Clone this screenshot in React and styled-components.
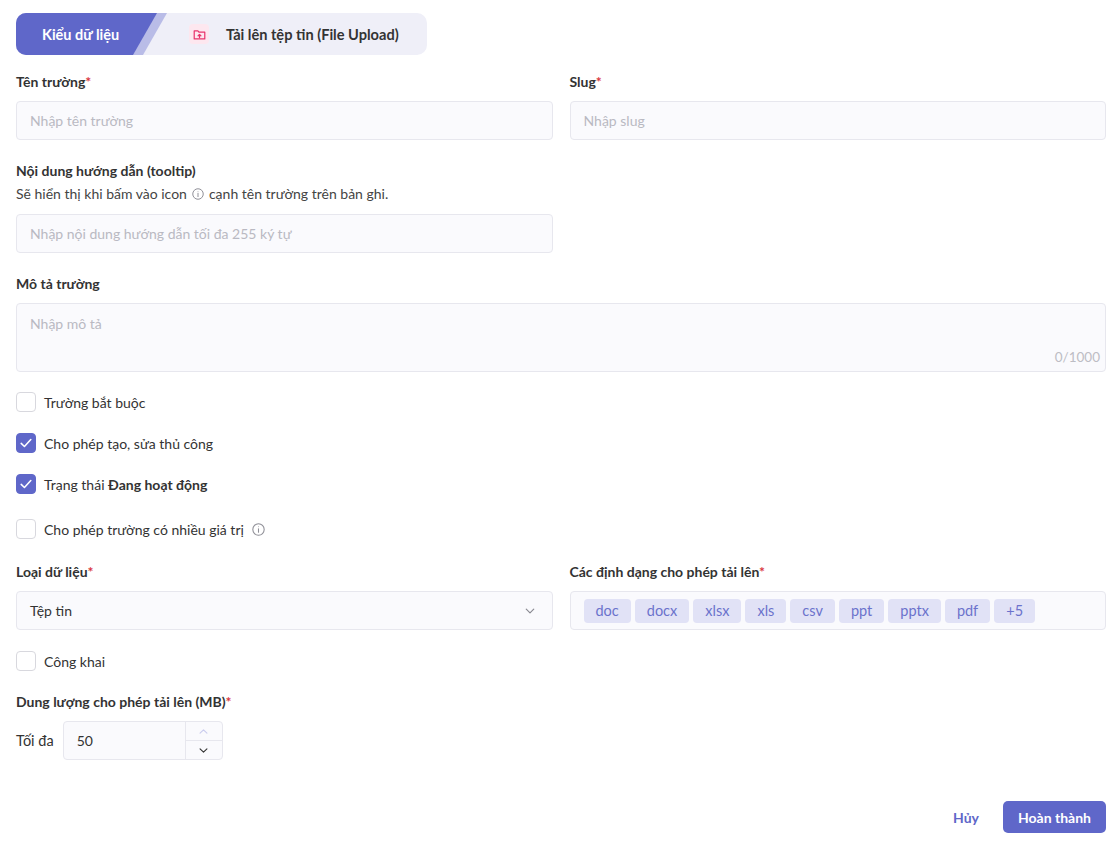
import styled, { createGlobalStyle } from 'styled-components';

const primary = '#5f67c9';

const GlobalStyle = createGlobalStyle`
  * { box-sizing: border-box; }
  body {
    margin: 0;
    background: #fff;
    font-family: Lato, "Noto Sans", sans-serif;
    color: #333;
  }
`;

const Page = styled.div`
  padding: 13px 13px 16px 16px;
  display: flex;
  flex-direction: column;
`;

const TabBar = styled.div`
  display: flex;
  align-items: center;
  width: 411px;
  height: 42px;
  background: #efeff8;
  border-radius: 10px;
  overflow: hidden;
`;

const ActiveTab = styled.div`
  position: relative;
  width: 151px;
  height: 100%;
  background: #b9bce7;
  clip-path: polygon(0 0, 100% 0, calc(100% - 24px) 100%, 0 100%);
  color: #fff;
  font-weight: 700;
  font-size: 14.5px;
  display: flex;
  align-items: center;
  padding-left: 26px;

  &::before {
    content: '';
    position: absolute;
    inset: 0;
    background: ${primary};
    clip-path: polygon(0 0, calc(100% - 10px) 0, calc(100% - 34px) 100%, 0 100%);
  }

  span { position: relative; }
`;

const Tab = styled.div`
  display: flex;
  align-items: center;
  gap: 17px;
  padding-left: 22px;
  font-weight: 700;
  font-size: 14.6px;
  color: #333;
`;

const TabIcon = styled.div`
  width: 20px;
  height: 20px;
  border-radius: 4px;
  background: #fde7ef;
  display: flex;
  align-items: center;
  justify-content: center;
`;

const Row = styled.div`
  display: grid;
  grid-template-columns: 1fr 1fr;
  column-gap: 17px;
  margin-top: ${({ $mt }) => $mt || 0}px;
`;

const Field = styled.div`
  display: flex;
  flex-direction: column;
`;

const Section = styled.div`
  margin-top: ${({ $mt }) => $mt || 0}px;
  display: flex;
  flex-direction: column;
`;

const Label = styled.div`
  font-weight: 700;
  font-size: 14px;
  line-height: 18px;
  color: #333;
  margin-bottom: ${({ $mb }) => ($mb === undefined ? 10 : $mb)}px;
`;

const Req = styled.span`
  color: #d9363e;
`;

const Hint = styled.div`
  font-size: 14px;
  line-height: 18px;
  color: #444;
  margin: 5px 0 11px;
  display: flex;
  align-items: center;
  gap: 5px;
`;

const Input = styled.div`
  height: 39px;
  border: 1px solid #e7e7ee;
  border-radius: 4px;
  background: #fafafd;
  display: flex;
  align-items: center;
  padding: 0 13px;
  font-size: 14px;
  color: ${({ $filled }) => ($filled ? '#333' : '#b9b9c2')};
`;

const HalfWidth = styled.div`
  width: calc(50% - 8.5px);
`;

const TextArea = styled.div`
  height: 69px;
  border: 1px solid #e7e7ee;
  border-radius: 4px;
  background: #fafafd;
  padding: 11px 13px 6px;
  display: flex;
  flex-direction: column;
  justify-content: space-between;
  font-size: 14px;
  color: #b9b9c2;
`;

const Counter = styled.div`
  align-self: flex-end;
  font-size: 13.5px;
  color: #bdbdc4;
  margin-right: -8px;
`;

const CheckList = styled.div`
  display: flex;
  flex-direction: column;
  margin-top: ${({ $mt }) => $mt || 20}px;
`;

const CheckRow = styled.label`
  display: flex;
  align-items: center;
  gap: 8px;
  height: 20px;
  font-size: 14px;
  color: #333;
  margin-bottom: ${({ $mb }) => $mb || 0}px;
  b { font-weight: 700; }
`;

const Box = styled.span`
  width: 20px;
  height: 20px;
  border-radius: 4px;
  border: 1px solid ${({ $on }) => ($on ? primary : '#d8d8de')};
  background: ${({ $on }) => ($on ? primary : '#fff')};
  display: flex;
  align-items: center;
  justify-content: center;
  flex-shrink: 0;
`;

const Select = styled(Input)`
  justify-content: space-between;
  color: #333;
  padding-right: 16px;
`;

const TagBox = styled.div`
  height: 39px;
  border: 1px solid #e7e7ee;
  border-radius: 4px;
  background: #fafafd;
  display: flex;
  align-items: center;
  gap: 4px;
  padding: 0 13px;
`;

const Tag = styled.span`
  height: 24px;
  padding: 0 12px;
  border-radius: 4px;
  background: #e1e2f6;
  color: #6b72cc;
  font-size: 14.5px;
  display: flex;
  align-items: center;
`;

const NumberRow = styled.div`
  display: flex;
  align-items: center;
  gap: 9px;
  font-size: 14.5px;
  color: #333;
`;

const NumberBox = styled.div`
  width: 160px;
  height: 39px;
  border: 1px solid #e7e7ee;
  border-radius: 4px;
  background: #fafafd;
  display: flex;
`;

const NumberValue = styled.div`
  flex: 1;
  display: flex;
  align-items: center;
  padding-left: 13px;
  font-size: 14px;
  color: #333;
`;

const Stepper = styled.div`
  width: 37px;
  border-left: 1px solid #e7e7ee;
  display: flex;
  flex-direction: column;
`;

const Step = styled.div`
  flex: 1;
  display: flex;
  align-items: center;
  justify-content: center;
  & + & { border-top: 1px solid #e7e7ee; }
`;

const Footer = styled.div`
  display: flex;
  justify-content: flex-end;
  align-items: center;
  gap: 24px;
  margin-top: 41px;
`;

const TextButton = styled.button`
  border: none;
  background: none;
  color: ${primary};
  font: 700 14px Lato, "Noto Sans", sans-serif;
  padding: 0;
  cursor: pointer;
`;

const PrimaryButton = styled.button`
  height: 32px;
  width: 103px;
  border: none;
  border-radius: 5px;
  background: ${primary};
  color: #fff;
  font: 700 14px Lato, "Noto Sans", sans-serif;
  cursor: pointer;
`;

const InfoIcon = ({ size = 12 }) => (
  <svg width={size} height={size} viewBox="0 0 16 16" fill="none" stroke="#8e8e96" strokeWidth="1.3">
    <circle cx="8" cy="8" r="7" />
    <line x1="8" y1="7" x2="8" y2="11.5" strokeLinecap="round" />
    <circle cx="8" cy="4.7" r="0.6" fill="#8e8e96" stroke="none" />
  </svg>
);

const Check = () => (
  <svg width="14" height="14" viewBox="0 0 16 16" fill="none" stroke="#fff" strokeWidth="1.8" strokeLinecap="round" strokeLinejoin="round">
    <polyline points="2.5,8.5 6.2,12 13.5,4" />
  </svg>
);

const Chevron = ({ up, color = '#888', size = 12 }) => (
  <svg width={size} height={size} viewBox="0 0 16 16" fill="none" stroke={color} strokeWidth="1.6" strokeLinecap="round" strokeLinejoin="round">
    <polyline points={up ? '3,10.5 8,5.5 13,10.5' : '3,5.5 8,10.5 13,5.5'} />
  </svg>
);

const FolderIcon = () => (
  <svg width="13" height="13" viewBox="0 0 16 16" fill="none" stroke="#e8346c" strokeWidth="1.5" strokeLinejoin="round" strokeLinecap="round">
    <path d="M1.5 3.5h4.5l1.5 1.7h7v8.3h-13z" />
    <path d="M8 12V8M6.3 9.6 8 8l1.7 1.6" />
  </svg>
);

const formats = ['doc', 'docx', 'xlsx', 'xls', 'csv', 'ppt', 'pptx', 'pdf', '+5'];

export default function App() {
  return (
    <>
      <GlobalStyle />
      <Page>
        <TabBar>
          <ActiveTab><span>Kiểu dữ liệu</span></ActiveTab>
          <Tab>
            <TabIcon><FolderIcon /></TabIcon>
            Tải lên tệp tin (File Upload)
          </Tab>
        </TabBar>

        <Row $mt={18}>
          <Field>
            <Label>Tên trường<Req>*</Req></Label>
            <Input>Nhập tên trường</Input>
          </Field>
          <Field>
            <Label>Slug<Req>*</Req></Label>
            <Input>Nhập slug</Input>
          </Field>
        </Row>

        <Section $mt={22}>
          <Label $mb={0}>Nội dung hướng dẫn (tooltip)</Label>
          <Hint>
            Sẽ hiển thị khi bấm vào icon <InfoIcon /> cạnh tên trường trên bản ghi.
          </Hint>
          <HalfWidth>
            <Input>Nhập nội dung hướng dẫn tối đa 255 ký tự</Input>
          </HalfWidth>
        </Section>

        <Section $mt={22}>
          <Label>Mô tả trường</Label>
          <TextArea>
            Nhập mô tả
            <Counter>0/1000</Counter>
          </TextArea>
        </Section>

        <CheckList>
          <CheckRow $mb={21}><Box />Trường bắt buộc</CheckRow>
          <CheckRow $mb={21}><Box $on><Check /></Box>Cho phép tạo, sửa thủ công</CheckRow>
          <CheckRow $mb={25}>
            <Box $on><Check /></Box>
            <span>Trạng thái <b>Đang hoạt động</b></span>
          </CheckRow>
          <CheckRow>
            <Box />Cho phép trường có nhiều giá trị
            <InfoIcon size={13} />
          </CheckRow>
        </CheckList>

        <Row $mt={24}>
          <Field>
            <Label>Loại dữ liệu<Req>*</Req></Label>
            <Select>
              Tệp tin
              <Chevron color="#8a8a92" />
            </Select>
          </Field>
          <Field>
            <Label>Các định dạng cho phép tải lên<Req>*</Req></Label>
            <TagBox>
              {formats.map((f) => (
                <Tag key={f}>{f}</Tag>
              ))}
            </TagBox>
          </Field>
        </Row>

        <CheckList $mt={21}>
          <CheckRow><Box />Công khai</CheckRow>
        </CheckList>

        <Section $mt={22}>
          <Label>Dung lượng cho phép tải lên (MB)<Req>*</Req></Label>
          <NumberRow>
            Tối đa
            <NumberBox>
              <NumberValue>50</NumberValue>
              <Stepper>
                <Step><Chevron up color="#c9cbee" size={11} /></Step>
                <Step><Chevron color="#333" size={11} /></Step>
              </Stepper>
            </NumberBox>
          </NumberRow>
        </Section>

        <Footer>
          <TextButton>Hủy</TextButton>
          <PrimaryButton>Hoàn thành</PrimaryButton>
        </Footer>
      </Page>
    </>
  );
}
